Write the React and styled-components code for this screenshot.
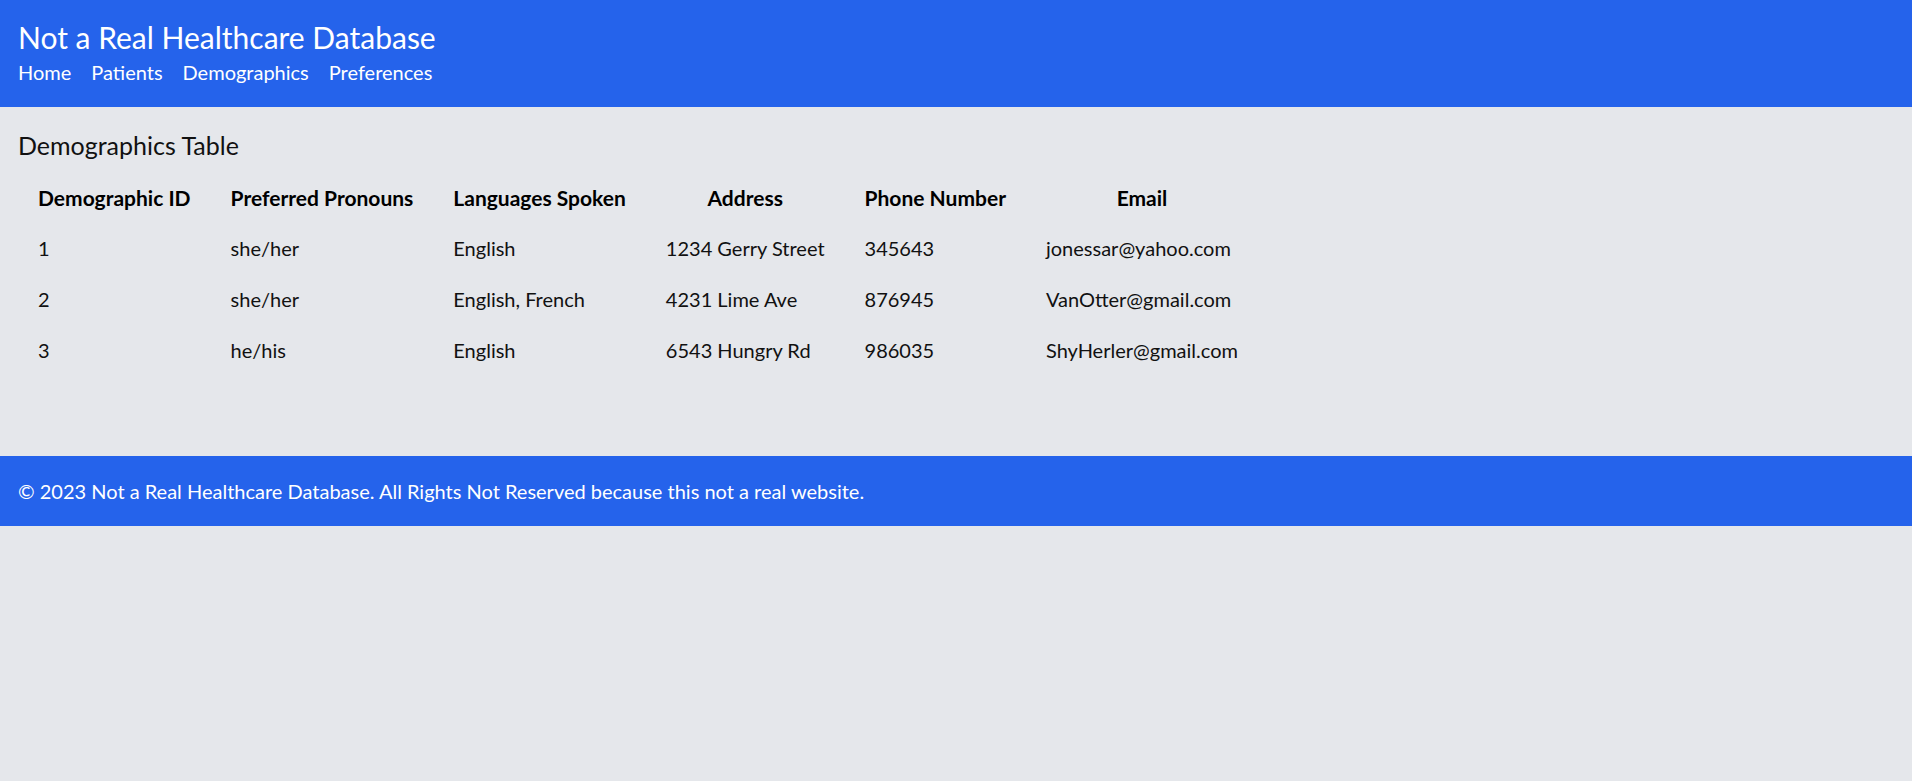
import React from 'react';
import styled, { createGlobalStyle } from 'styled-components';

const GlobalStyle = createGlobalStyle`
  html, body {
    margin: 0;
    padding: 0;
    background: #e5e7eb;
    font-family: Lato, "Noto Sans", "Liberation Sans", sans-serif;
    color: #111;
  }
  * {
    box-sizing: border-box;
  }
`;

const Header = styled.header`
  background: #2563eb;
  color: #fff;
  padding: 18px 18px 20px;
`;

const SiteTitle = styled.h1`
  margin: 0;
  font-size: 30px;
  line-height: 39px;
  font-weight: 400;
`;

const Nav = styled.nav`
  display: flex;
  gap: 20px;
  line-height: 30px;
`;

const NavLink = styled.a`
  color: #fff;
  font-size: 20px;
  text-decoration: none;
  cursor: pointer;
`;

const Main = styled.main`
  padding: 21px 18px 80px;
`;

const SectionTitle = styled.h2`
  margin: 0 0 10px;
  font-size: 25px;
  line-height: 34px;
  font-weight: 400;
`;

const Table = styled.table`
  border-collapse: collapse;
  font-size: 20px;
`;

const Th = styled.th`
  padding: 10px 20px;
  line-height: 31px;
  font-size: 21px;
  font-weight: 700;
  color: #000;
  text-align: center;
  white-space: nowrap;
`;

const Td = styled.td`
  padding: 10px 20px;
  line-height: 31px;
  text-align: left;
  white-space: nowrap;
`;

const Footer = styled.footer`
  background: #2563eb;
  color: #fff;
  height: 70px;
  padding: 0 18px;
  display: flex;
  align-items: center;
  font-size: 20px;
`;

const columns = [
  'Demographic ID',
  'Preferred Pronouns',
  'Languages Spoken',
  'Address',
  'Phone Number',
  'Email',
];

const rows = [
  { id: 1, pronouns: 'she/her', languages: 'English', address: '1234 Gerry Street', phone: '345643', email: 'jonessar@yahoo.com' },
  { id: 2, pronouns: 'she/her', languages: 'English, French', address: '4231 Lime Ave', phone: '876945', email: 'VanOtter@gmail.com' },
  { id: 3, pronouns: 'he/his', languages: 'English', address: '6543 Hungry Rd', phone: '986035', email: 'ShyHerler@gmail.com' },
];

export default function App() {
  return (
    <>
      <GlobalStyle />
      <Header>
        <SiteTitle>Not a Real Healthcare Database</SiteTitle>
        <Nav>
          <NavLink>Home</NavLink>
          <NavLink>Patients</NavLink>
          <NavLink>Demographics</NavLink>
          <NavLink>Preferences</NavLink>
        </Nav>
      </Header>
      <Main>
        <SectionTitle>Demographics Table</SectionTitle>
        <Table>
          <thead>
            <tr>
              {columns.map(col => (
                <Th key={col}>{col}</Th>
              ))}
            </tr>
          </thead>
          <tbody>
            {rows.map(row => (
              <tr key={row.id}>
                <Td>{row.id}</Td>
                <Td>{row.pronouns}</Td>
                <Td>{row.languages}</Td>
                <Td>{row.address}</Td>
                <Td>{row.phone}</Td>
                <Td>{row.email}</Td>
              </tr>
            ))}
          </tbody>
        </Table>
      </Main>
      <Footer>
        © 2023 Not a Real Healthcare Database. All Rights Not Reserved because this not a real website.
      </Footer>
    </>
  );
}
